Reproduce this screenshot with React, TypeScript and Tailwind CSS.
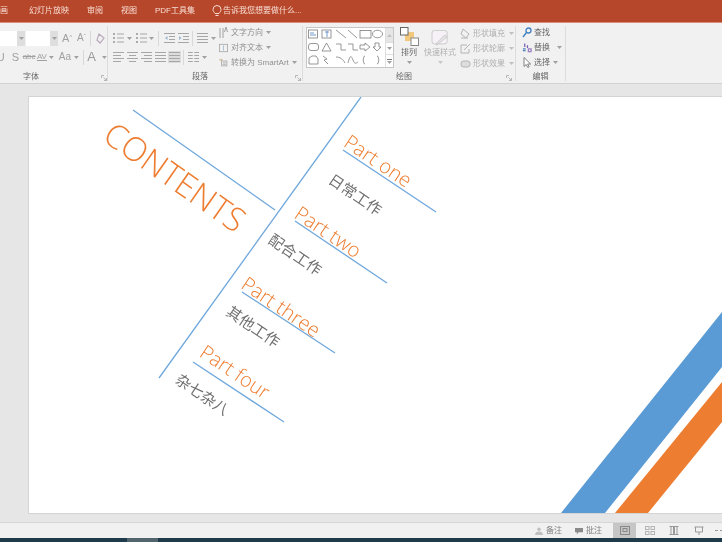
import React from 'react';

const cjk = "font-['Liberation_Sans','Noto_Sans_CJK_SC',sans-serif]";

const Caret = ({ className = '' }: { className?: string }) => (
  <svg width="5" height="3" viewBox="0 0 5 3" className={className}>
    <path d="M0 0h5L2.5 3z" fill="#a0a0a0" />
  </svg>
);

const Launcher = () => (
  <svg width="6" height="6" viewBox="0 0 6 6" fill="none" stroke="#a8a8a8" strokeWidth="0.8">
    <path d="M0.5 3V0.5H3M2.5 2.5L5.5 5.5M5.5 3v2.5H3" />
  </svg>
);

const Sep = () => <div className="w-px h-[15px] bg-[#d8d8d8]" />;

// little stacked-line icon used by all the paragraph buttons
const Lines = ({ kind }: { kind: 'left' | 'center' | 'right' | 'justify' | 'bullets' | 'number' | 'out' | 'in' | 'cols' }) => {
  const rows = [1.5, 4.5, 7.5, 10.5];
  const span = (i: number): [number, number] => {
    if (kind === 'left') return [0, i % 2 ? 8 : 11];
    if (kind === 'center') return i % 2 ? [2, 9] : [0, 11];
    if (kind === 'right') return [i % 2 ? 3 : 0, 11];
    if (kind === 'out' || kind === 'in') return i === 0 || i === 3 ? [0, 11] : [5, 11];
    if (kind === 'bullets' || kind === 'number') return [4, 11];
    return [0, 11];
  };
  return (
    <svg width="11" height="12" viewBox="0 0 11 12" fill="none" stroke="#a6a6a6" strokeWidth="1">
      {(kind === 'bullets' || kind === 'number' ? [2, 6, 10] : rows).map((y, i) => {
        const [a, b] = span(i);
        return <path key={y} d={`M${a} ${y}H${b}`} />;
      })}
      {(kind === 'bullets' || kind === 'number') && (
        <path d="M0 2h2M0 6h2M0 10h2" stroke="#949494" strokeWidth="1.3" />
      )}
      {kind === 'out' && <path d="M3.5 4L1 6l2.5 2z" fill="#9db5cf" stroke="none" />}
      {kind === 'in' && <path d="M1 4l2.5 2L1 8z" fill="#9db5cf" stroke="none" />}
      {kind === 'cols' && <path d="M5.5 0v12" stroke="#f1f1f1" strokeWidth="1.5" />}
    </svg>
  );
};

const FontGroup = () => (
  <div className="w-[108px] shrink-0 border-r border-[#dcdcdc] flex flex-col">
    <div className="flex items-center h-[16px] mt-[4px]">
      <div className="w-[25px] h-[15px] bg-white flex justify-end">
        <div className="w-[8px] bg-[#dedede] flex items-center justify-center"><Caret /></div>
      </div>
      <div className="w-[32px] h-[15px] bg-white ml-[1px] flex justify-end">
        <div className="w-[8px] bg-[#dedede] flex items-center justify-center"><Caret /></div>
      </div>
      <span className="ml-[4px] w-[13px] text-[11px] leading-[14px] text-[#a0a0a0]">A<sup className="text-[6px]">^</sup></span>
      <span className="ml-[2px] w-[12px] text-[10px] leading-[14px] text-[#a0a0a0]">A<sup className="text-[6px]">ˇ</sup></span>
      <div className="ml-[1px]"><Sep /></div>
      <svg width="11" height="11" viewBox="0 0 11 11" className="ml-[4px]" fill="none" stroke="#b8a8bb" strokeWidth="1.2">
        <path d="M4 1l5 4-4 5-3-3zM2 7l3 3" />
      </svg>
    </div>
    <div className="flex items-center h-[16px] mt-[3px] text-[#a0a0a0] text-[11px] leading-[14px] -ml-[7px]">
      <span className="w-[16px] text-center">U</span>
      <span className="w-[15px] text-center">S</span>
      <span className="w-[14px] text-center text-[8px] line-through">abc</span>
      <span className="w-[13px] text-center text-[8px] underline">AV</span>
      <Caret className="ml-[1px]" />
      <span className="ml-[3px] w-[17px] text-center text-[10px]">Aa</span>
      <Caret className="ml-[1px]" />
      <div className="ml-[4px]"><Sep /></div>
      <span className="ml-[3px] w-[10px] text-[13px] text-center text-[#999]">A</span>
      <Caret className="ml-[6px]" />
    </div>
    <div className="flex-1 flex items-end justify-between">
      <span className="ml-[23px] text-[8px] leading-[8px] text-[#666]">字体</span>
      <Launcher />
    </div>
  </div>
);

const TextCmd = ({ label, icon }: { label: string; icon: React.ReactNode }) => (
  <div className="flex items-center h-[15px] text-[8px] text-[#909090] gap-[3px]">
    <span className="w-[9px] flex justify-center">{icon}</span>
    <span className="whitespace-nowrap">{label}</span>
    <Caret />
  </div>
);

const ParagraphGroup = () => (
  <div className="w-[195px] shrink-0 border-r border-[#dcdcdc] flex flex-col relative">
    <div className="flex flex-1">
      <div className="w-[111px] pl-[5px] shrink-0">
        <div className="flex items-center h-[16px] mt-[4px]">
          <Lines kind="bullets" />
          <Caret className="ml-[3px]" />
          <span className="ml-[4px]"><Lines kind="number" /></span>
          <Caret className="ml-[2px]" />
          <div className="ml-[4px]"><Sep /></div>
          <span className="ml-[5px]"><Lines kind="out" /></span>
          <span className="ml-[3px]"><Lines kind="in" /></span>
          <div className="ml-[3px]"><Sep /></div>
          <span className="ml-[4px]"><Lines kind="justify" /></span>
          <Caret className="ml-[3px]" />
        </div>
        <div className="flex items-center h-[16px] mt-[3px]">
          <Lines kind="left" />
          <span className="ml-[3px]"><Lines kind="center" /></span>
          <span className="ml-[3px]"><Lines kind="right" /></span>
          <span className="ml-[3px]"><Lines kind="justify" /></span>
          <span className="ml-[2px] bg-[#dcdcdc] px-[1px]"><Lines kind="justify" /></span>
          <div className="ml-[2px]"><Sep /></div>
          <span className="ml-[4px]"><Lines kind="cols" /></span>
          <Caret className="ml-[3px]" />
        </div>
      </div>
      <div className="flex flex-col -mt-[1px]">
        <TextCmd
          label="文字方向"
          icon={
            <svg width="9" height="13" viewBox="0 0 9 13" fill="none" stroke="#a0a0a0">
              <path d="M1 2v10M4 2v10M7 1l-1.5 5M7 1l1.5 5" />
            </svg>
          }
        />
        <TextCmd
          label="对齐文本"
          icon={
            <svg width="11" height="12" viewBox="0 0 11 12" fill="none" stroke="#a8a8a8">
              <rect x="0.5" y="1.5" width="10" height="9" />
              <path d="M5.5 3v6" stroke="#9db5cf" />
            </svg>
          }
        />
        <TextCmd
          label="转换为 SmartArt"
          icon={
            <svg width="12" height="11" viewBox="0 0 12 11" fill="none" stroke="#a0a0a0">
              <path d="M0 2h5M3 0.5v3" stroke="#c9ae80" />
              <rect x="3.5" y="3.5" width="7" height="6.5" />
              <path d="M5 6h4M5 8h4" />
            </svg>
          }
        />
      </div>
    </div>
    <div className="h-[8px] flex items-center justify-center pr-[10px] text-[8px] leading-[8px] text-[#666]">段落</div>
    <div className="absolute right-[1px] bottom-0"><Launcher /></div>
  </div>
);

const ShapeGallery = () => (
  <div className="w-[88px] h-[41px] bg-white border border-[#c6c6c6] flex">
    <svg width="78" height="39" viewBox="0 0 78 39" fill="none" stroke="#7d7d7d" strokeWidth="0.8">
      <rect x="1.5" y="2" width="9" height="8" />
      <path d="M3 5h4M3 7h6" stroke="#4f81bd" />
      <rect x="15" y="2" width="9" height="8" />
      <path d="M20 3v6M18 4h4" stroke="#4f81bd" />
      <path d="M29 2l10 8M41 2l9 8" />
      <rect x="53" y="2.5" width="11" height="7.5" />
      <ellipse cx="70.5" cy="6" rx="5" ry="3.8" />
      <rect x="1.5" y="15.5" width="10" height="7" rx="2.5" />
      <path d="M19.5 15l4.5 8h-9zM29 16h5v6h5M41 16h5v6h5" />
      <path d="M53 17h5v-2l5 4-5 4v-2h-5zM68 15h4v4h2l-4 4-4-4h2z" />
      <path d="M2 36v-6l3-2h4l2 3v5zM16 28l4 3-3 1 4 4M29 29c4 0 7 2 9 6M41 35c2-8 3-8 5-3s3 3 5 2M58 28c-2 0-1 3-2 4 1 1 0 4 2 4M70 28c2 0 1 3 2 4-1 1 0 4-2 4" />
    </svg>
    <div className="flex-1 flex flex-col border-l border-[#dedede]">
      <div className="h-[14px] bg-[#e6e6e6] flex items-center justify-center"><Caret className="rotate-180 opacity-50" /></div>
      <div className="h-[13px] flex items-center justify-center border-y border-[#dedede]"><Caret /></div>
      <div className="flex-1 flex flex-col gap-[1px] items-center justify-center"><div className="w-[5px] h-px bg-[#777]" /><Caret /></div>
    </div>
  </div>
);

const StyleCmd = ({ label, icon }: { label: string; icon: React.ReactNode }) => (
  <div className="flex items-center h-[15px] text-[8px] text-[#b0b0b0] gap-[2px] whitespace-nowrap">
    <span className="w-[11px] flex justify-center">{icon}</span>
    {label} <Caret className="ml-[2px] opacity-60" />
  </div>
);

const DrawingGroup = () => (
  <div className="w-[213px] shrink-0 border-r border-[#dcdcdc] flex flex-col relative">
    <div className="flex flex-1 pt-[1px]">
      <div className="ml-[3px]"><ShapeGallery /></div>
      <div className="w-[24px] ml-[3px] flex flex-col items-center">
        <svg width="19" height="19" viewBox="0 0 19 19">
          <rect x="5" y="5" width="9" height="9" fill="#f2c77e" />
          <rect x="0.5" y="0.5" width="7.5" height="7.5" fill="#fff" stroke="#666" />
          <rect x="11" y="11" width="7.5" height="7.5" fill="#fff" stroke="#888" />
        </svg>
        <span className="text-[8px] leading-[14px] text-[#666] whitespace-nowrap">排列</span>
        <Caret className="mt-[1px]" />
      </div>
      <div className="w-[36px] ml-[1px] flex flex-col items-center">
        <svg width="20" height="16" viewBox="0 0 21 19" className="mt-[3px]" fill="none">
          <rect x="1" y="0.5" width="18" height="16" rx="3" fill="#f6f1f6" stroke="#c4c4c4" />
          <path d="M19 8L9 16l-3 2 1-3 9-9z" fill="#e4e4e4" stroke="#b8b8b8" strokeWidth="0.7" />
        </svg>
        <span className="text-[8px] leading-[14px] text-[#b0b0b0] whitespace-nowrap">快速样式</span>
        <Caret className="mt-[1px] opacity-50" />
      </div>
      <div className="flex flex-col ml-[2px] -mt-[1px]">
        <StyleCmd
          label="形状填充"
          icon={<svg width="11" height="11" viewBox="0 0 11 11" fill="none" stroke="#b4b4b4"><path d="M3 1l6 5-3 4-5-4zM1 10h7" /></svg>}
        />
        <StyleCmd
          label="形状轮廓"
          icon={<svg width="11" height="11" viewBox="0 0 11 11" fill="none" stroke="#b4b4b4"><path d="M1 2h6M1 2v8h8V6M4 7l6-6" /></svg>}
        />
        <StyleCmd
          label="形状效果"
          icon={<svg width="11" height="10" viewBox="0 0 11 10" fill="#ddd" stroke="#b4b4b4"><rect x="1" y="2" width="9" height="6" rx="2.5" /></svg>}
        />
      </div>
    </div>
    <div className="h-[8px] flex items-center justify-center pr-[10px] text-[8px] leading-[8px] text-[#666]">绘图</div>
    <div className="absolute right-[3px] bottom-0"><Launcher /></div>
  </div>
);

const EditGroup = () => (
  <div className="w-[50px] shrink-0 border-r border-[#dcdcdc] flex flex-col">
    <div className="flex-1 -mt-[1px] pl-[6px] text-[8px] text-[#666]">
      <div className="flex items-center h-[15px] gap-[2px] whitespace-nowrap">
        <svg width="10" height="11" viewBox="0 0 10 11" fill="none" stroke="#3f7fbf" strokeWidth="1.3">
          <circle cx="6.5" cy="3.5" r="2.5" />
          <path d="M4.5 5.5L1 10" />
        </svg>
        查找
      </div>
      <div className="flex items-center h-[15px] gap-[2px] whitespace-nowrap">
        <svg width="10" height="11" viewBox="0 0 11 11" fill="none" strokeWidth="1.4">
          <path d="M3 1v4M6 3v3" stroke="#7a5fb0" />
          <path d="M1 7h3M1 9h3" stroke="#4f81bd" />
          <path d="M7 7h3v3H7z" stroke="#9a7fc4" />
        </svg>
        替换
        <Caret className="ml-[5px]" />
      </div>
      <div className="flex items-center h-[15px] gap-[2px] whitespace-nowrap">
        <svg width="10" height="11" viewBox="0 0 10 11" fill="#fff" stroke="#666" strokeWidth="0.8">
          <path d="M2 0.5v9l2.2-2 1.6 3 1.4-.7-1.6-2.8h3z" />
        </svg>
        选择
        <Caret className="ml-[1px]" />
      </div>
    </div>
    <div className="h-[8px] flex items-center justify-center text-[8px] leading-[8px] text-[#666]">编辑</div>
  </div>
);

const Slide = () => (
  <div className="relative flex-1 h-[416px] bg-white overflow-hidden shadow-[0_0_0_1px_#d4d4d4]">
    <svg width="693" height="416" viewBox="29 97 693 416" className="absolute inset-0" fill="none" stroke="#6fa8dc" strokeWidth="1.3">
      <path d="M361 97L159 378" />
      <path d="M133 110L275 210" />
      <path d="M343 150L436 212" />
      <path d="M295 221L387 283" />
      <path d="M242 292L335 353" />
      <path d="M193 362L284 422" />
      <polygon points="722,312 722,367 605,513 561,513" fill="#5b9bd5" stroke="none" />
      <polygon points="722,382 722,422 648,513 615,513" fill="#ed7d31" stroke="none" />
    </svg>
    <span className="absolute left-[146px] top-[80px] -translate-x-1/2 -translate-y-1/2 rotate-[35deg] whitespace-nowrap font-['Open_Sans',sans-serif] font-light text-[33px] leading-[38px] text-[#ed7d31]">CONTENTS</span>
    <span className="absolute left-[349px] top-[64px] -translate-x-1/2 -translate-y-1/2 rotate-[34deg] whitespace-nowrap font-['Open_Sans',sans-serif] font-light text-[20px] leading-[24px] text-[#ed7d31]">Part one</span>
    <span className="absolute left-[299px] top-[135px] -translate-x-1/2 -translate-y-1/2 rotate-[34deg] whitespace-nowrap font-['Open_Sans',sans-serif] font-light text-[20px] leading-[24px] text-[#ed7d31]">Part two</span>
    <span className="absolute left-[252px] top-[210px] -translate-x-1/2 -translate-y-1/2 rotate-[34deg] whitespace-nowrap font-['Open_Sans',sans-serif] font-light text-[20px] leading-[24px] text-[#ed7d31]">Part three</span>
    <span className="absolute left-[206px] top-[275px] -translate-x-1/2 -translate-y-1/2 rotate-[34deg] whitespace-nowrap font-['Open_Sans',sans-serif] font-light text-[20px] leading-[24px] text-[#ed7d31]">Part four</span>
    <span className={`absolute left-[326px] top-[98px] -translate-x-1/2 -translate-y-1/2 rotate-[34deg] whitespace-nowrap text-[15px] leading-[18px] text-[#707070] ${cjk}`}>日常工作</span>
    <span className={`absolute left-[266px] top-[158px] -translate-x-1/2 -translate-y-1/2 rotate-[34deg] whitespace-nowrap text-[15px] leading-[18px] text-[#707070] ${cjk}`}>配合工作</span>
    <span className={`absolute left-[224px] top-[230px] -translate-x-1/2 -translate-y-1/2 rotate-[34deg] whitespace-nowrap text-[15px] leading-[18px] text-[#707070] ${cjk}`}>其他工作</span>
    <span className={`absolute left-[173px] top-[298px] -translate-x-1/2 -translate-y-1/2 rotate-[34deg] whitespace-nowrap text-[15px] leading-[18px] text-[#707070] ${cjk}`}>杂七杂八</span>
  </div>
);

export default function App() {
  return (
    <div className={`w-[722px] h-[542px] overflow-hidden flex flex-col bg-[#e6e6e6] blur-[0.35px] ${cjk}`}>
      {/* title tabs */}
      <div className="h-[23px] shrink-0 bg-[#b7472a] border-b border-[#dc8f78] flex items-center text-[8px] text-[#f7ddd5] whitespace-nowrap">
        <span className="w-[29px] pr-[21px] overflow-hidden flex justify-end"><span className="shrink-0">动画</span></span>
        <span className="w-[58px]">幻灯片放映</span>
        <span className="w-[34px]">审阅</span>
        <span className="w-[34px]">视图</span>
        <span className="w-[54px]">PDF工具集</span>
        <svg width="10" height="12" viewBox="0 0 10 12" fill="none" stroke="#f7ddd5" className="ml-[3px]">
          <path d="M3 8.5C2 7 1 6.3 1 4.5a4 4 0 018 0C9 6.300 8 7 7 8.500zM3.500 10.500h3" />
        </svg>
        <span className="ml-[1px]">告诉我您想要做什么...</span>
      </div>

      {/* ribbon */}
      <div className="h-[61px] shrink-0 bg-[#f1f1f1] border-b border-[#d2d2d2] flex pt-[3px] pb-[2px]">
        <FontGroup />
        <ParagraphGroup />
        <DrawingGroup />
        <EditGroup />
      </div>

      {/* workspace */}
      <div className="flex-1 flex pl-[29px] pt-[13px] pb-[9px] border-b border-[#d6d6d6]">
        <Slide />
      </div>

      {/* status bar */}
      <div className="h-[15px] shrink-0 bg-[#f1f1f1] flex items-center justify-end text-[8px] text-[#808080] whitespace-nowrap">
        <svg width="8" height="8" viewBox="0 0 9 9" fill="#c0c0c0"><circle cx="4.500" cy="2.500" r="2" /><path d="M0 9c0-3 2-4 4.500-4S9 6 9 9z" /></svg>
        <span className="ml-[3px]">备注</span>
        <svg width="8" height="8" viewBox="0 0 9 9" fill="#8a8a8a" className="ml-[13px]"><path d="M0 1h9v5H4L2 8.500V6H0z" /></svg>
        <span className="ml-[3px]">批注</span>
        <div className="ml-[11px] w-[23px] h-full bg-[#c6c6c6] flex items-center justify-center">
          <svg width="10" height="9" viewBox="0 0 10 9" fill="none" stroke="#888"><rect x="0.500" y="0.500" width="9" height="8" /><rect x="3" y="2.500" width="4" height="3" /></svg>
        </div>
        <svg width="10" height="9" viewBox="0 0 10 9" fill="none" stroke="#b4b4b4" className="ml-[9px]"><rect x="0.500" y="0.500" width="3.500" height="3" /><rect x="6" y="0.500" width="3.500" height="3" /><rect x="0.500" y="5.500" width="3.500" height="3" /><rect x="6" y="5.500" width="3.500" height="3" /></svg>
        <svg width="10" height="9" viewBox="0 0 10 9" fill="none" stroke="#999" className="ml-[14px]"><path d="M0.500 0.500h9M0.500 8.500h9M2 0.500h2.500v8H2zM5.500 0.500H8v8H5.500z" /></svg>
        <svg width="10" height="10" viewBox="0 0 10 10" fill="none" stroke="#999" className="ml-[15px]"><path d="M0.500 1h9M1.500 1v5h7V1M5 6v3" /></svg>
        <div className="ml-[11px] w-[7px] flex gap-[2px]">
          <div className="w-[3px] h-px bg-[#999]" />
          <div className="w-[2px] h-px bg-[#999]" />
        </div>
      </div>

      {/* window taskbar edge */}
      <div className="h-[4px] shrink-0 bg-[#1f3a4a] flex">
        <div className="ml-[127px] w-[31px] bg-[#52656e]" />
      </div>
    </div>
  );
}
